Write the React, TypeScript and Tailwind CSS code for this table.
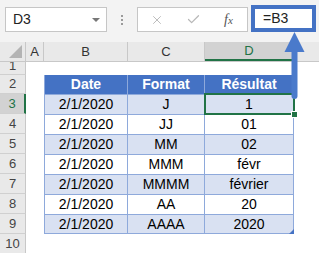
import React from 'react';
import { X, Check } from 'lucide-react';

const rows = [
  { n: 3, date: '2/1/2020', format: 'J', result: '1' },
  { n: 4, date: '2/1/2020', format: 'JJ', result: '01' },
  { n: 5, date: '2/1/2020', format: 'MM', result: '02' },
  { n: 6, date: '2/1/2020', format: 'MMM', result: 'févr' },
  { n: 7, date: '2/1/2020', format: 'MMMM', result: 'février' },
  { n: 8, date: '2/1/2020', format: 'AA', result: '20' },
  { n: 9, date: '2/1/2020', format: 'AAAA', result: '2020' },
];

function RowHead({ n, active }: { n: number; active?: boolean }) {
  return (
    <div
      className={
        'w-[26px] shrink-0 h-full flex items-center justify-center text-[13px] border-b border-[#d0d0d0] ' +
        (active
          ? 'bg-[#d2d2d2] text-[#217346] border-r-2 border-r-[#217346]'
          : 'bg-[#e9e9e9] text-[#444] border-r border-r-[#c8c8c8]')
      }
    >
      {n}
    </div>
  );
}

export default function App() {
  return (
    <div className="relative w-[319px] h-[253px] overflow-hidden bg-white font-['Liberation_Sans',Arial,sans-serif]">
      {/* formula bar */}
      <div className="h-[42px] bg-[#f3f3f3] flex items-start pt-[7px]">
        <div className="ml-[5px] w-[102px] h-[25px] bg-white border border-[#c6c6c6] flex items-center pl-[7px] pr-[6px] text-[14px] text-[#222]">
          <span className="flex-1">D3</span>
          <span className="w-0 h-0 border-l-[4px] border-r-[4px] border-t-[4px] border-l-transparent border-r-transparent border-t-[#777]" />
        </div>
        <div className="w-[30px] h-[25px] flex flex-col items-center justify-center gap-[2px]">
          <span className="w-[2px] h-[2px] bg-[#9a9a9a]" />
          <span className="w-[2px] h-[2px] bg-[#9a9a9a]" />
          <span className="w-[2px] h-[2px] bg-[#9a9a9a]" />
        </div>
        <div className="w-[111px] h-[25px] bg-white border border-[#c6c6c6] flex items-center">
          <div className="w-[38px] flex justify-center">
            <X className="w-[14px] h-[14px] text-[#b8b8b8]" strokeWidth={1.6} />
          </div>
          <div className="w-[34px] flex justify-center">
            <Check className="w-[15px] h-[15px] text-[#b8b8b8]" strokeWidth={2} />
          </div>
          <div className="flex-1 flex justify-center font-['Liberation_Serif',serif] italic text-[14px] text-[#555]">
            f<span className="text-[11px] mt-[3px]">x</span>
          </div>
        </div>
        <div className="ml-[3px] -mt-[2px] w-[65px] h-[27px] bg-white border-[4px] border-[#4472c4] flex items-center pl-[8px] text-[14px] text-[#222]">
          =B3
        </div>
      </div>

      {/* column headers */}
      <div className="h-[20px] flex bg-[#e9e9e9] text-[13px] text-[#333] border-b border-[#c8c8c8]">
        <div className="w-[26px] shrink-0 border-r border-[#c8c8c8] flex items-end justify-end pr-[3px] pb-[3px]">
          <svg className="block shrink-0" width="13" height="13" viewBox="0 0 13 13">
            <path d="M13 0 L13 13 L0 13 Z" fill="#b4b4b4" />
          </svg>
        </div>
        <div className="w-[18px] shrink-0 border-r border-[#c8c8c8] flex items-center justify-center">A</div>
        <div className="w-[84px] shrink-0 border-r border-[#c8c8c8] flex items-center justify-center">B</div>
        <div className="w-[77px] shrink-0 border-r border-[#c8c8c8] flex items-center justify-center">C</div>
        <div className="w-[89px] shrink-0 border-r border-[#c8c8c8] bg-[#d2d2d2] border-b-2 border-b-[#217346] text-[#217346] flex items-center justify-center">D</div>
        <div className="flex-1" />
      </div>

      {/* row 1 (partly scrolled) */}
      <div className="h-[13px] flex overflow-hidden">
        <div className="w-[26px] shrink-0 h-full bg-[#e9e9e9] border-r border-[#c8c8c8] border-b border-b-[#d0d0d0] text-[13px] text-[#444] flex justify-center overflow-hidden">
          <span className="-mt-[6px] leading-[20px]">1</span>
        </div>
        <div className="flex-1" />
      </div>

      {/* row 2: table header */}
      <div className="h-[19px] flex">
        <RowHead n={2} />
        <div className="w-[18px] shrink-0" />
        <div className="w-[84px] shrink-0 bg-[#4472c4] border-l border-r border-[#8ea9db] text-white font-bold text-[14px] flex items-center justify-center">Date</div>
        <div className="w-[77px] shrink-0 bg-[#4472c4] border-r border-[#8ea9db] text-white font-bold text-[14px] flex items-center justify-center">Format</div>
        <div className="w-[89px] shrink-0 bg-[#4472c4] border-r border-[#8ea9db] text-white font-bold text-[14px] flex items-center justify-center">Résultat</div>
        <div className="flex-1" />
      </div>

      {rows.map((r, i) => (
        <div key={r.n} className="h-[20px] flex">
          <RowHead n={r.n} active={r.n === 3} />
          <div className="w-[18px] shrink-0" />
          {[r.date, r.format, r.result].map((v, j) => (
            <div
              key={j}
              className={
                'shrink-0 border-t border-r border-[#8ea9db] text-[14px] text-black flex items-center justify-center ' +
                (i % 2 === 0 ? 'bg-[#d9e1f2] ' : 'bg-white ') +
                (i === rows.length - 1 ? 'border-b ' : '') +
                (j === 0 ? 'w-[84px] border-l' : j === 1 ? 'w-[77px]' : 'w-[89px]')
              }
            >
              {v}
            </div>
          ))}
          <div className="flex-1" />
        </div>
      ))}

      <div className="h-[20px] flex">
        <RowHead n={10} />
        <div className="flex-1" />
      </div>

      {/* selected cell D3 */}
      <div className="absolute left-[204px] top-[93px] w-[91px] h-[22px] border-2 border-[#217346]" />
      <div className="absolute left-[292px] top-[112px] w-[5px] h-[5px] bg-[#217346] border border-white box-content -ml-[1px] -mt-[1px]" />

      {/* table resize handle */}
      <svg className="absolute left-[289px] top-[229px]" width="5" height="5" viewBox="0 0 5 5">
        <path d="M5 0 L5 5 L0 5 Z" fill="#4472c4" />
      </svg>

      {/* arrow */}
      <svg className="absolute left-[284px] top-[31px]" width="22" height="70" viewBox="0 0 22 70">
        <path d="M10.5 1 L20.5 21 L0.5 21 Z" fill="#4a7acb" />
        <path d="M7.5 20 L13.5 20 L13.5 65 Q13.5 68 10.5 68 Q7.5 68 7.5 65 Z" fill="#4a7acb" />
      </svg>
    </div>
  );
}
